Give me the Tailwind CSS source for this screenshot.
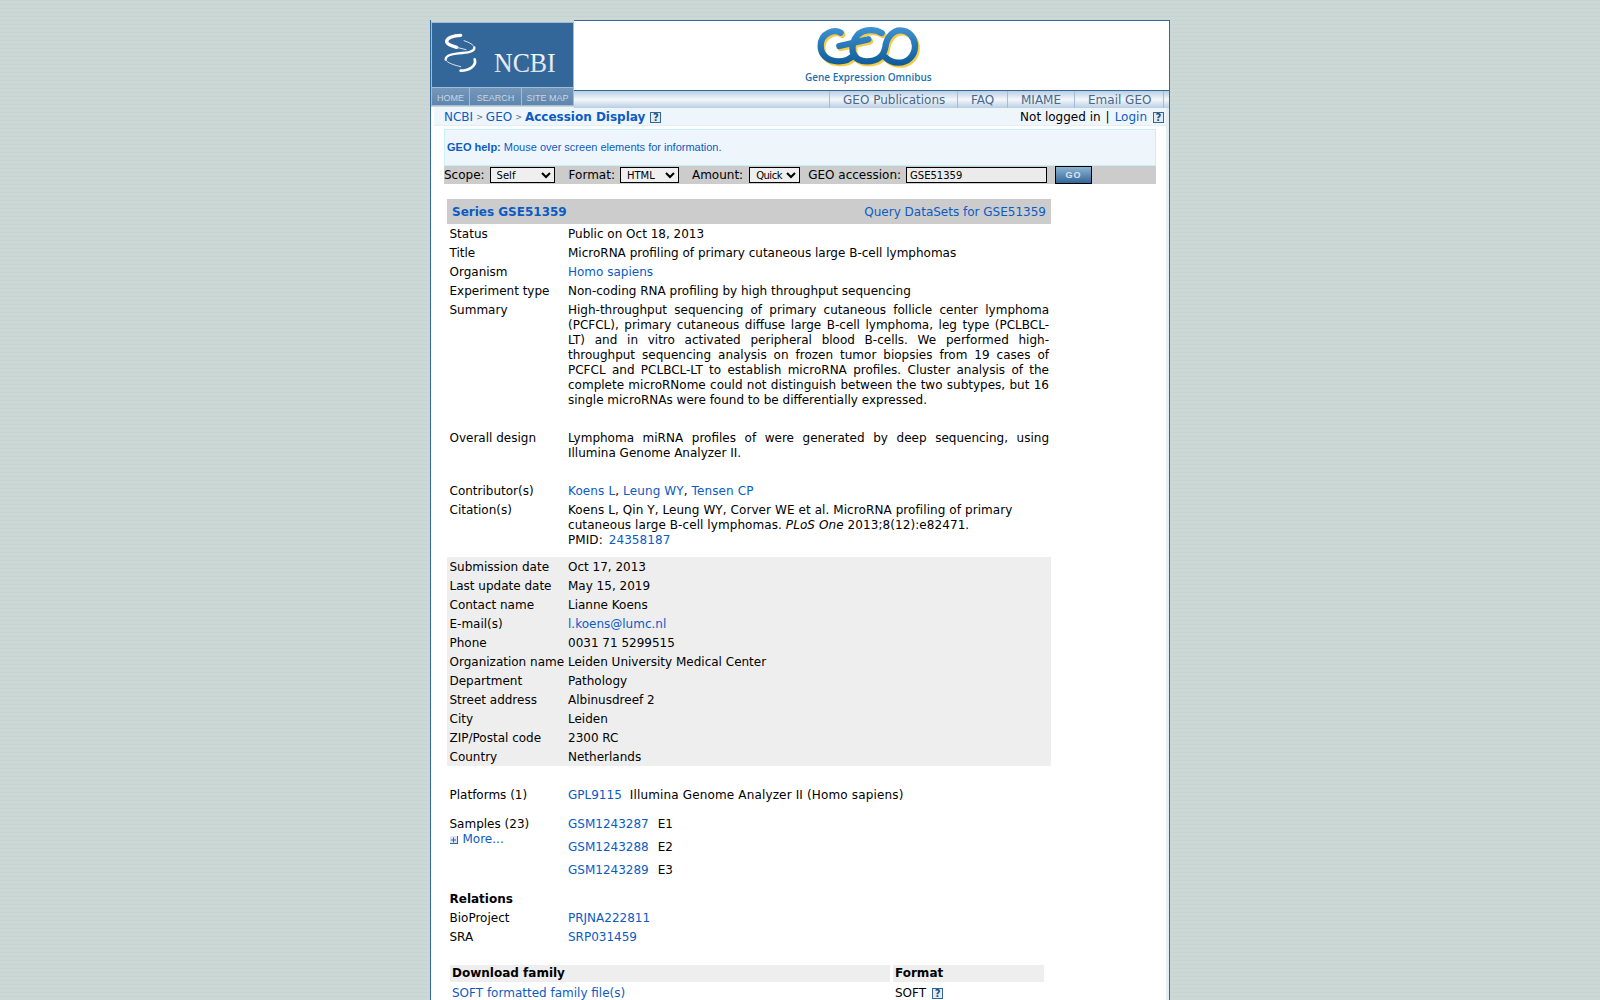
<!DOCTYPE html>
<html lang="en">
<head>
  <meta charset="UTF-8">
  <title>GEO Accession viewer</title>
  <script src="https://cdn.jsdelivr.net/npm/@tailwindcss/browser@4"></script>
</head>
<body class="h-[1000px] overflow-hidden bg-[#ccd8d6] bg-[repeating-linear-gradient(0deg,#ccd8d6_0,#ccd8d6_3px,#c6d4d1_3px,#c6d4d1_4px)] font-['DejaVu_Sans',sans-serif] text-[12px] leading-[15px] text-black">
  <div class="ml-[430px] mt-[20px] w-[740px] h-[980px] border-x border-t border-[#336699] bg-white">
    <!-- header and nav -->
    <div class="flex h-[86px]">
      <div class="w-[143px] -mt-[1px] pt-[2px] bg-[#ccd8d6]">
        <div class="h-[66px] border border-[#a3bdd6] bg-[#336699]">
          <svg width="141" height="64" viewBox="-24 -15 423 192">
            <defs>
              <linearGradient id="ncbiText" x1="0" y1="0" x2="0" y2="1"><stop offset="0" stop-color="#ffffff"/><stop offset="1" stop-color="#cfdbe8"/></linearGradient>
            </defs>
            <g fill="none" stroke-linecap="round">
              <path d="M62 22 C40 22 18 30 20 42 C22 50 36 54 50 58" stroke="#fff" stroke-width="10"/>
              <path d="M50 58 L78 65" stroke="#dfe8f1" stroke-width="3"/>
              <path d="M72 38 C90 44 100 50 103 58" stroke="#dfe8f1" stroke-width="3"/>
              <path d="M103 58 C105 72 80 74 55 76 C35 78 16 84 17 95" stroke="#fff" stroke-width="7"/>
              <path d="M17 95 C20 105 45 112 62 116" stroke="#dfe8f1" stroke-width="3"/>
              <path d="M104 94 C110 112 90 128 62 128" stroke="#fff" stroke-width="8"/>
            </g>
            <text x="162" y="131" fill="url(#ncbiText)" font-family="'Liberation Serif',serif" font-size="84" textLength="185" lengthAdjust="spacingAndGlyphs">NCBI</text>
          </svg>
        </div>
        <div class="flex h-[18px] border-x border-b border-[#a3bdd6] bg-[linear-gradient(#7597ba,#5f86ad)] text-[#c8d7e6] text-[9px] leading-[20px] font-['Liberation_Sans',sans-serif]">
          <span class="w-[38px] text-center border-r border-[#a3bdd6]">HOME</span>
          <span class="w-[52px] text-center border-r border-[#a3bdd6]">SEARCH</span>
          <span class="flex-1 text-center">SITE MAP</span>
        </div>
      </div>
      <div class="flex-1">
        <div class="h-[68px] pl-[231px]">
          <div class="w-[127px]">
            <svg width="120" height="50" viewBox="0 0 360 150" class="ml-[5px] mt-[1px]">
              <defs>
                <linearGradient id="geoBlue" gradientUnits="userSpaceOnUse" x1="0" y1="15" x2="0" y2="130"><stop offset="0" stop-color="#3f93d3"/><stop offset="1" stop-color="#0f5a98"/></linearGradient>
              </defs>
              <g fill="none" stroke-width="19" stroke-linecap="round" stroke="#f6cb45" transform="translate(5 6)">
                <path d="M92 32 C75 22 32 30 32 72 C32 100 55 118 85 118 C105 118 122 110 132 98"/>
                <path d="M88 72 L175 52"/>
                <path d="M215 33 C190 18 150 22 135 50 C118 85 130 118 170 118 C205 118 222 100 226 75 C230 45 250 25 270 25 C300 25 315 50 315 72 C315 100 295 122 265 122 C248 122 235 115 225 105"/>
              </g>
              <g fill="none" stroke-width="19" stroke-linecap="round" stroke="url(#geoBlue)">
                <path d="M92 32 C75 22 32 30 32 72 C32 100 55 118 85 118 C105 118 122 110 132 98"/>
                <path d="M88 72 L175 52"/>
                <path d="M215 33 C190 18 150 22 135 50 C118 85 130 118 170 118 C205 118 222 100 226 75 C230 45 250 25 270 25 C300 25 315 50 315 72 C315 100 295 122 265 122 C248 122 235 115 225 105"/>
              </g>
            </svg>
            <div class="-mt-[2px] font-['Open_Sans',sans-serif] font-semibold text-[#1f6fae] text-[10px] leading-[14px] whitespace-nowrap">Gene Expression Omnibus</div>
          </div>
        </div>
        <div class="flex justify-end h-[18px] pr-[5px] border-t border-[#336699] bg-[linear-gradient(#b9cee3,#f3f7fb_50%,#b9cee3)] text-[#48678a] leading-[18px]">
          <span class="w-[128px] pl-[13px] border-l border-[#a3bdd6]">GEO Publications</span>
          <span class="w-[50px] pl-[13px] border-l border-[#a3bdd6]">FAQ</span>
          <span class="w-[67px] pl-[13px] border-l border-[#a3bdd6]">MIAME</span>
          <span class="w-[90px] pl-[13px] border-x border-[#a3bdd6]">Email GEO</span>
        </div>
      </div>
    </div>
    <div class="h-[894px] border-r-[3px] border-[#e4eff5] overflow-hidden">
      <!-- breadcrumb -->
      <div class="flex justify-between items-center h-[19px] ml-[3px] pt-[3px] pl-[10px] pr-[2px] bg-[#eef6fc] border-b border-[#e4eff5]">
        <div class="flex items-center">
          <a class="text-[#0b5bc4]">NCBI</a><span class="text-[#55708a] text-[8px] mx-[3px]">&gt;</span><a class="text-[#0b5bc4]">GEO</a><span class="text-[#55708a] text-[8px] mx-[3px]">&gt;</span><b class="text-[#0b5bc4]">Accession Display</b>
          <span class="ml-[5px] w-[11px] h-[11px] border border-[#336699] bg-[#e3ecf5] text-[10px] leading-[9px] text-center text-[#244f7c] font-bold">?</span>
        </div>
        <div class="flex items-center">Not logged in <span class="mx-[5px]">|</span><a class="text-[#0b5bc4]">Login</a>
          <span class="ml-[6px] w-[11px] h-[11px] border border-[#336699] bg-[#e3ecf5] text-[10px] leading-[9px] text-center text-[#244f7c] font-bold">?</span>
        </div>
      </div>
      <!-- help and search bar -->
      <div class="ml-[13px] mr-[10px]">
        <div class="mt-[3px] h-[37px] bg-[#eef6fc] border border-[#c8f0f4] pl-[2px] font-['Liberation_Sans',sans-serif] text-[11px] leading-[34px] text-[#0b5bc4]"><b>GEO help:</b> Mouse over screen elements for information.</div>
        <div class="flex items-center h-[18px] bg-[#cccccc]">
          <span>Scope:</span><select class="ml-[5px] w-[65px] h-[16px] pl-[2px] border border-black bg-[#efefef] text-[10px]"><option>Self</option></select>
          <span class="ml-[14px]">Format:</span><select class="ml-[5px] w-[59px] h-[16px] pl-[2px] border border-black bg-[#efefef] text-[10px]"><option>HTML</option></select>
          <span class="ml-[13px]">Amount:</span><select class="ml-[6px] w-[51px] h-[16px] pl-[2px] border border-black bg-[#efefef] text-[10px] tracking-[-0.5px]"><option>Quick</option></select>
          <span class="ml-[8px]">GEO accession:</span><input value="GSE51359" class="ml-[5px] w-[141px] h-[16px] border border-black bg-[#ebebeb] text-[10px] pl-[3px]">
          <button class="ml-[8px] w-[37px] h-[18px] border border-black bg-[linear-gradient(#8db4d0,#336699)] text-[#dce6f0] text-[9px] font-bold tracking-[1px] font-['Liberation_Sans',sans-serif]">GO</button>
        </div>
      </div>
      <!-- series table -->
      <div class="mt-[15px] ml-[16px] w-[604px]">
        <div class="flex justify-between items-center h-[25px] bg-[#cccccc] px-[5px] pt-[1px]">
          <b class="text-[#0b5bc4]">Series GSE51359</b>
          <a class="text-[#0b5bc4]">Query DataSets for GSE51359</a>
        </div>
        <div class="grid grid-cols-[118.5px_481px] pl-[2.5px] mt-[3px] gap-y-[4px]">
          <div>Status</div><div>Public on Oct 18, 2013</div>
          <div>Title</div><div>MicroRNA profiling of primary cutaneous large B-cell lymphomas</div>
          <div>Organism</div><div><a class="text-[#0b5bc4]">Homo sapiens</a></div>
          <div>Experiment type</div><div>Non-coding RNA profiling by high throughput sequencing</div>
          <div>Summary</div><div class="text-justify pb-[19px]">High-throughput sequencing of primary cutaneous follicle center lymphoma (PCFCL), primary cutaneous diffuse large B-cell lymphoma, leg type (PCLBCL-LT) and in vitro activated peripheral blood B-cells. We performed high-throughput sequencing analysis on frozen tumor biopsies from 19 cases of PCFCL and PCLBCL-LT to establish microRNA profiles. Cluster analysis of the complete microRNome could not distinguish between the two subtypes, but 16 single microRNAs were found to be differentially expressed.</div>
          <div>Overall design</div><div class="text-justify pb-[19px]">Lymphoma miRNA profiles of were generated by deep sequencing, using Illumina Genome Analyzer II.</div>
          <div>Contributor(s)</div><div class="tracking-[0.12px]"><a class="text-[#0b5bc4]">Koens L</a>, <a class="text-[#0b5bc4]">Leung WY</a>, <a class="text-[#0b5bc4]">Tensen CP</a></div>
          <div>Citation(s)</div><div class="tracking-[0.08px]">Koens L, Qin Y, Leung WY, Corver WE et al. MicroRNA profiling of primary cutaneous large B-cell lymphomas. <i>PLoS One</i> 2013;8(12):e82471.<br>PMID: <a class="ml-[2px] text-[#0b5bc4]">24358187</a></div>
        </div>
        <div class="grid grid-cols-[118.5px_481px] pl-[2.5px] mt-[9px] pt-[3px] pb-[1px] gap-y-[4px] bg-[#eeeeee]">
          <div>Submission date</div><div>Oct 17, 2013</div>
          <div>Last update date</div><div>May 15, 2019</div>
          <div>Contact name</div><div>Lianne Koens</div>
          <div>E-mail(s)</div><div><a class="text-[#0b5bc4]">l.koens@lumc.nl</a></div>
          <div>Phone</div><div>0031 71 5299515</div>
          <div class="whitespace-nowrap">Organization name</div><div>Leiden University Medical Center</div>
          <div>Department</div><div>Pathology</div>
          <div>Street address</div><div>Albinusdreef 2</div>
          <div>City</div><div>Leiden</div>
          <div>ZIP/Postal code</div><div>2300 RC</div>
          <div>Country</div><div>Netherlands</div>
        </div>
        <div class="grid grid-cols-[118.5px_481px] pl-[2.5px] mt-[22px]">
          <div>Platforms (1)</div><div><a class="text-[#0b5bc4]">GPL9115</a><span class="ml-[8px] tracking-[0.15px]">Illumina Genome Analyzer II (Homo sapiens)</span></div>
          <div class="mt-[14px]">Samples (23)<div class="flex items-center"><svg width="8" height="8" viewBox="0 0 8 8" class="mr-[5px]"><rect width="8" height="8" fill="#dde6f0"/><path d="M1 4h5M3.5 1.5v5M7.5 0v8M0 7.5h8" stroke="#336699" fill="none"/></svg><a class="text-[#0b5bc4]">More...</a></div></div>
          <div class="mt-[14px] flex flex-col gap-y-[8px]">
            <div><a class="text-[#0b5bc4]">GSM1243287</a><span class="ml-[9px]">E1</span></div>
            <div><a class="text-[#0b5bc4]">GSM1243288</a><span class="ml-[9px]">E2</span></div>
            <div><a class="text-[#0b5bc4]">GSM1243289</a><span class="ml-[9px]">E3</span></div>
          </div>
          <div class="col-span-2 mt-[14px] font-bold">Relations</div>
          <div class="mt-[4px]">BioProject</div><div class="mt-[4px]"><a class="text-[#0b5bc4]">PRJNA222811</a></div>
          <div class="mt-[4px]">SRA</div><div class="mt-[4px]"><a class="text-[#0b5bc4]">SRP031459</a></div>
        </div>
        <div class="grid grid-cols-[440px_151px] gap-x-[3px] ml-[3px] mt-[20px]">
          <div class="h-[17px] bg-[#eeeeee] font-bold pl-[2px] pt-[1px]">Download family</div>
          <div class="h-[17px] bg-[#eeeeee] font-bold pl-[2px] pt-[1px]">Format</div>
          <div class="pl-[2px] mt-[4px]"><a class="text-[#0b5bc4]">SOFT formatted family file(s)</a></div>
          <div class="pl-[2px] mt-[4px] flex items-center">SOFT<span class="ml-[6px] w-[11px] h-[11px] border border-[#336699] bg-[#e3ecf5] text-[10px] leading-[9px] text-center text-[#244f7c] font-bold">?</span></div>
        </div>
      </div>
    </div>
  </div>
</body>
</html>
